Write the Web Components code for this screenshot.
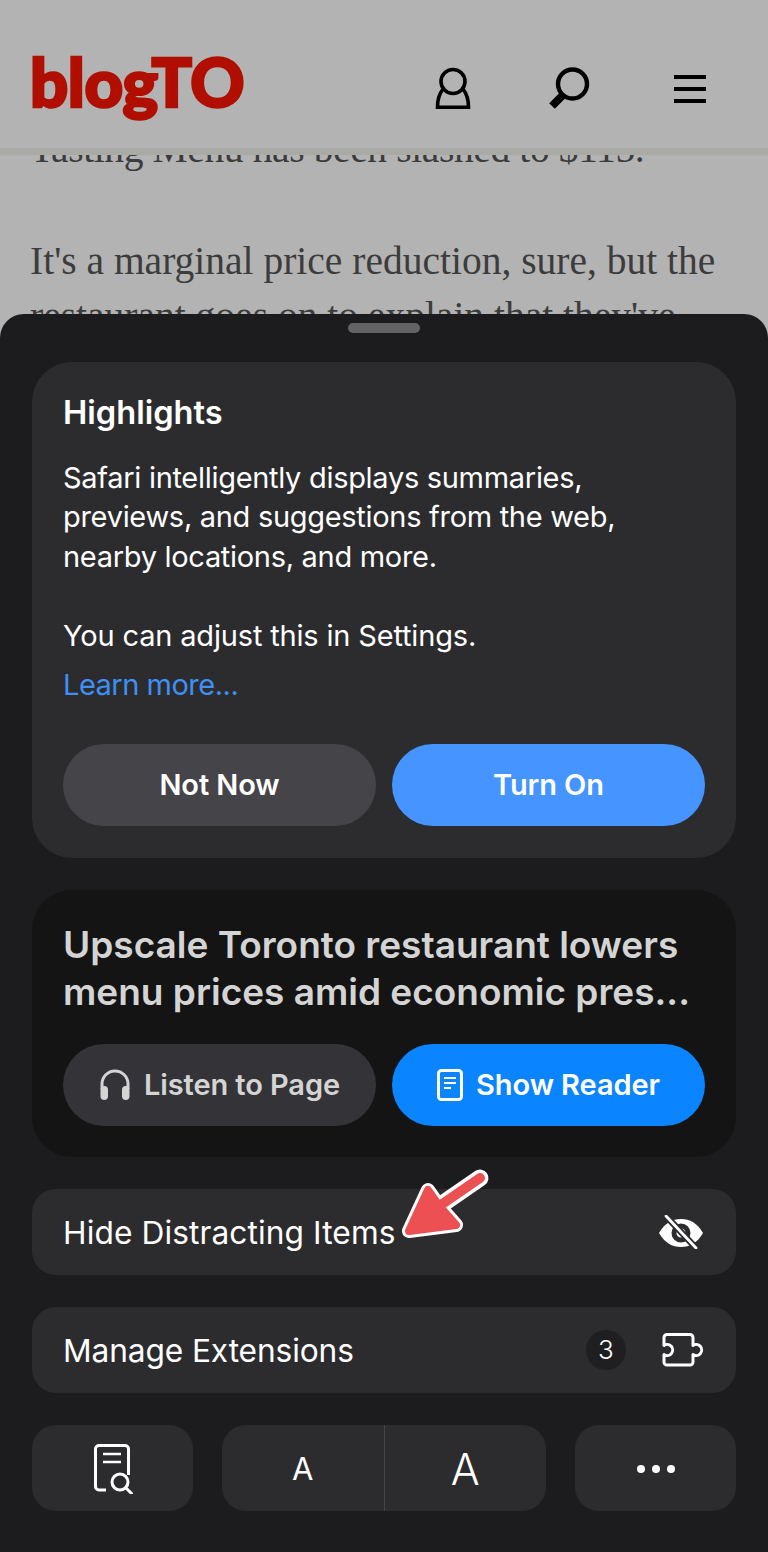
<!DOCTYPE html>
<html><head><meta charset="utf-8">
<style>
html,body{margin:0;padding:0;background:#b3b3b3;}
body{width:768px;height:1552px;overflow:hidden;font-family:Inter,"Liberation Sans",sans-serif;}
</style></head><body>
<x-page>
  <x-header></x-header>
  <x-article></x-article>
  <x-sheet>
    <x-card tone="light">
      <x-highlights></x-highlights>
    </x-card>
    <x-card tone="dark">
      <x-reader></x-reader>
    </x-card>
    <x-row label="Hide Distracting Items" style="--ls:.09px"><svg width="46" height="34" viewBox="0 0 46 34" fill="none"><path d="M1 18C7 8 14 4 23 4s16 4 22 14c-6 10-13 14-22 14S7 28 1 18Z" fill="#fff"/><circle cx="23" cy="18" r="7" stroke="#2c2c2e" stroke-width="5"/><path d="M8 1l30 32" stroke="#2c2c2e" stroke-width="6.500"/><path d="M8 1l30 32" stroke="#fff" stroke-width="2.800" stroke-linecap="round"/></svg></x-row>
    <x-row label="Manage Extensions" badge="3" style="--ls:-.12px"><svg width="42" height="34" viewBox="0 0 42 34" fill="none" stroke="#fff" stroke-width="3" stroke-linejoin="round"><path d="M5 1.500H28a3 3 0 0 1 3 3V12.500a5.500 5.500 0 1 1 0 9V29a3 3 0 0 1-3 3H5a3 3 0 0 1-3-3V21.500a5.500 5.500 0 1 0 0-9V4.500a3 3 0 0 1 3-3Z"/></svg></x-row>
    <x-tools></x-tools>
  </x-sheet>
  <x-arrow></x-arrow>
</x-page>
<script>
function def(name, css, html){
  customElements.define(name, class extends HTMLElement{
    connectedCallback(){
      if(this.shadowRoot) return;
      const r=this.attachShadow({mode:'open'});
      r.innerHTML='<style>'+css+'</style>'+(typeof html==='function'?html(this):html);
    }
  });
}
def('x-page',':host{display:block;position:relative;width:768px;height:1552px;overflow:hidden;background:#b3b3b3}','<slot></slot>');
def('x-header',`:host{display:flex;align-items:flex-start;height:148px;background:#b3b3b3;border-bottom:7px solid #a9a9a6;padding:0 0 0 30px;position:relative;z-index:2}
.logo{font:900 67px/1 Lato,sans-serif;letter-spacing:-.4px;-webkit-text-stroke:2.6px #b00f00;color:#b00f00;margin-top:48px;flex:none;width:404px}
svg{display:block;flex:none}`,
`<div class="logo">blogTO</div>
<svg style="margin-top:66px" width="38" height="44" viewBox="0 0 38 44" fill="none" stroke="#000" stroke-width="3.600"><circle cx="19" cy="15.500" r="12"/><path d="M9 23C5 28 3.500 35 3.500 41.200H34.500C34.500 35 33 28 29 23"/></svg>
<svg style="margin:66px 0 0 74px" width="46" height="44" viewBox="0 0 46 44" fill="none"><circle cx="26.500" cy="18" r="14.500" stroke="#000" stroke-width="4.400"/><path d="M16 30 6 40" stroke="#000" stroke-width="8"/></svg>
<svg style="margin:75px 0 0 82px" width="32" height="28" viewBox="0 0 32 28" fill="#000"><rect width="32" height="4"/><rect y="12" width="32" height="4"/><rect y="24" width="32" height="4"/></svg>`);
def('x-article',`:host{display:block;height:159px;overflow:hidden;font:39.5px/55px "Liberation Serif",serif;color:#3c3c3c;padding-left:30px;white-space:nowrap}
p{margin:0}.a{margin-top:-32px;margin-bottom:58.500px;letter-spacing:-.38px;line-height:52px}`,
`<p class="a">Tasting Menu has been slashed to $115.</p><p>It's a marginal price reduction, sure, but the</p><p>restaurant goes on to explain that they've</p>`);
def('x-sheet',`:host{display:flex;flex-direction:column;position:absolute;left:0;right:0;top:314px;bottom:0;z-index:3;background:#1c1c1e;border-radius:24px 24px 0 0;padding:9px 32px 0;box-sizing:border-box;gap:32px}
.h{width:72px;height:10px;border-radius:5px;background:#636366;margin:0 auto -3px;flex:none}`,
`<div class="h"></div><slot></slot>`);
def('x-card',`:host{display:block;border-radius:40px;padding:32px 31px;background:#2c2c2e}
:host([tone=dark]){background:#141414;padding-bottom:31px}`,'<slot></slot>');
def('x-pill',`:host{flex:1 1 0;display:flex;align-items:center;justify-content:center;gap:13px;height:82px;border-radius:41px;font:600 29px/1 Inter,sans-serif;letter-spacing:-.1px;background:var(--bg);color:var(--fg)}`,'<slot></slot>');
def('x-highlights',`:host{display:block;color:#fff}
h2{font:600 32.600px/40px Inter,sans-serif;margin:-2px 0 26px}
p{margin:0;font:400 29px/39.400px Inter,sans-serif;letter-spacing:-.3px}
.s{margin-top:40px;letter-spacing:-.17px}
a{display:block;color:#3f8ff5;font:400 29px/39px Inter,sans-serif;letter-spacing:-.5px;margin-top:9px}
.b{display:flex;gap:16px;margin-top:40px}`,
`<h2>Highlights</h2>
<p>Safari intelligently displays summaries,<br>previews, and suggestions from the web,<br>nearby locations, and more.</p>
<p class="s">You can adjust this in Settings.</p>
<a>Learn more...</a>
<div class="b"><x-pill style="--bg:#454549;--fg:#fff">Not Now</x-pill><x-pill style="--bg:#4694ff;--fg:#fff">Turn On</x-pill></div>`);
def('x-reader',`:host{display:block}
h2{font:600 37px/47px Inter,sans-serif;color:#d4d4d4;margin:-1px 0 29px;white-space:nowrap}
.b{display:flex;gap:16px}`,
`<h2>Upscale Toronto restaurant lowers<br>menu prices amid economic pres...</h2>
<div class="b"><x-pill style="--bg:#343438;--fg:#d4d4d4"><svg width="32" height="32" viewBox="0 0 32 32" fill="none"><path d="M3 20v-5a13 13 0 0 1 26 0v5" stroke="#d4d4d4" stroke-width="3"/><rect x="1.500" y="17" width="7.500" height="14" rx="3.700" fill="#d4d4d4"/><rect x="23" y="17" width="7.500" height="14" rx="3.700" fill="#d4d4d4"/></svg>Listen to Page</x-pill><x-pill style="--bg:#0a84ff;--fg:#fff"><svg width="26" height="32" viewBox="0 0 26 32" fill="none" stroke="#fff" stroke-width="3"><rect x="1.500" y="1.500" width="23" height="29" rx="3"/><path d="M7 9h12M7 14h12M7 19h7" stroke-width="2.200"/></svg>Show Reader</x-pill></div>`);
def('x-row',`:host{display:flex;align-items:center;height:86px;border-radius:24px;background:#2c2c2e;padding:0 32px 0 31px;color:#fff;font:400 31.700px/1 Inter,sans-serif;flex:none}
.l{flex:1;padding-top:2px;letter-spacing:var(--ls,0)}
.bd{width:40px;height:40px;border-radius:50%;background:#1f1f21;display:flex;align-items:center;justify-content:center;font-size:26px;font-weight:300;margin-right:36px}
::slotted(svg){display:block}`,
t=>`<span class="l">${t.getAttribute('label')}</span>${t.hasAttribute('badge')?`<span class="bd">${t.getAttribute('badge')}</span>`:''}<slot></slot>`);
def('x-tools',`:host{display:flex;justify-content:space-between;flex:none}
.t{height:86px;box-sizing:border-box;padding-top:2px;border-radius:24px;background:#2c2c2e;display:flex;align-items:center;justify-content:center;color:#fff;font-family:Inter,sans-serif;font-weight:300}
.i{width:161px}.m{width:324px;padding-top:0}
.m div{flex:1;height:100%;padding-top:2px;box-sizing:border-box;display:flex;align-items:center;justify-content:center}
.m div+div{border-left:1px solid #45454a}`,
`<div class="t i"><svg style="margin-left:3px" width="40" height="50" viewBox="0 0 40 50" fill="none" stroke="#fff" stroke-width="3"><path d="M12 46H5a3.500 3.500 0 0 1-3.500-3.500V5A3.500 3.500 0 0 1 5 1.500h26A3.500 3.500 0 0 1 34.500 5v26"/><path d="M9 10h18M9 18h18" stroke-width="2.600"/><circle cx="26" cy="38" r="8"/><path d="M32 44l5.500 5.500" stroke-linecap="round"/></svg></div>
<div class="t m"><div style="font-size:31px;font-weight:400">A</div><div style="font-size:43px">A</div></div>
<div class="t i"><svg width="38" height="8" viewBox="0 0 38 8" fill="#fff"><circle cx="4" cy="4" r="4"/><circle cx="19" cy="4" r="4"/><circle cx="34" cy="4" r="4"/></svg></div>`);
def('x-arrow',`:host{position:absolute;left:395px;top:1165px;width:100px;height:80px;z-index:5;display:block}svg{display:block}`,
`<svg width="100" height="80" viewBox="0 0 100 80" fill="none" stroke-linecap="round" stroke-linejoin="round">
<path d="M14 66 33 25 45 42 61 60Z" fill="#fff" stroke="#fff" stroke-width="14"/>
<path d="M40 44 85 13" stroke="#fff" stroke-width="17"/>
<path d="M14 66 33 25 45 42 61 60Z" fill="#ec5052" stroke="#ec5052" stroke-width="8"/>
<path d="M40 44 85 13" stroke="#ec5052" stroke-width="10"/>
</svg>`);
</script>
</body></html>
